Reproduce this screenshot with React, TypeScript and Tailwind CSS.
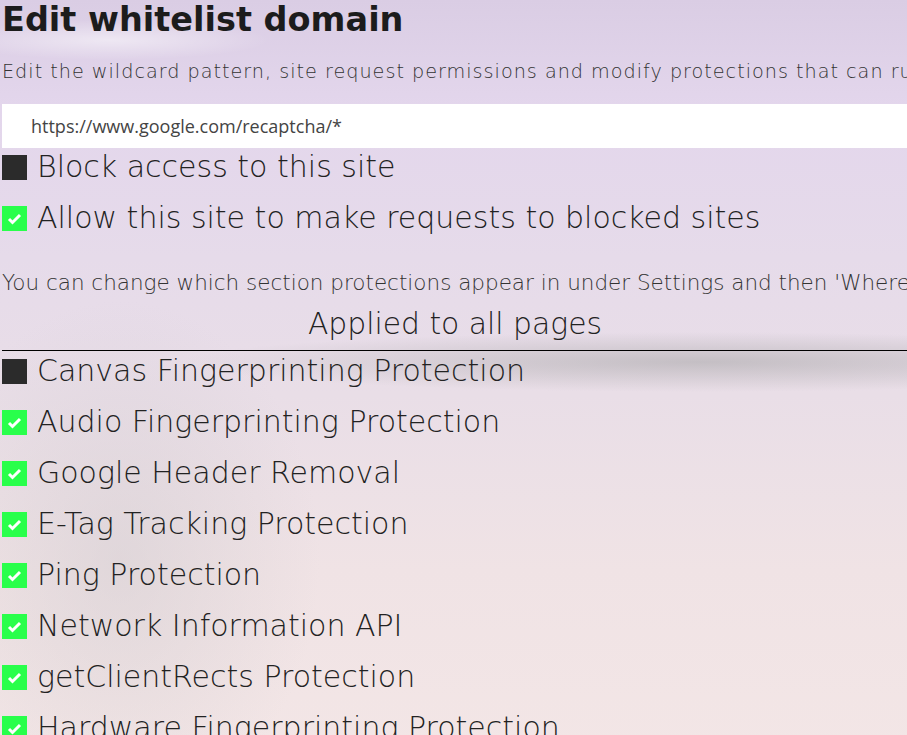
import React from "react";

const SITE_OPTIONS = [
  { label: "Block access to this site", checked: false },
  { label: "Allow this site to make requests to blocked sites", checked: true },
];

const PROTECTIONS = [
  { label: "Canvas Fingerprinting Protection", checked: false },
  { label: "Audio Fingerprinting Protection", checked: true },
  { label: "Google Header Removal", checked: true },
  { label: "E-Tag Tracking Protection", checked: true },
  { label: "Ping Protection", checked: true },
  { label: "Network Information API", checked: true },
  { label: "getClientRects Protection", checked: true },
  { label: "Hardware Fingerprinting Protection", checked: true },
];

function Box({ checked }: { checked: boolean }) {
  if (!checked) {
    return <span className="mt-[6px] block h-[25px] w-[25px] shrink-0 bg-[#2b2b2b]" />;
  }
  return (
    <span className="mt-[6px] flex h-[25px] w-[25px] shrink-0 items-center justify-center bg-[#29ff4b]">
      <svg width="25" height="25" viewBox="0 0 25 25">
        <polyline
          points="7,13 10.5,16.5 18,9"
          fill="none"
          stroke="white"
          strokeWidth="3"
        />
      </svg>
    </span>
  );
}

function Row({ label, checked }: { label: string; checked: boolean }) {
  return (
    <label className="flex h-[51px] items-start gap-[10px] whitespace-nowrap pt-[1px]">
      <Box checked={checked} />
      <span className="font-['DejaVu_Sans_ExtraLight','DejaVu_Sans',sans-serif] text-[30px] font-extralight leading-[35px] text-[#222]">
        {label}
      </span>
    </label>
  );
}

export default function App() {
  return (
    <div className="min-h-screen w-full overflow-hidden bg-[radial-gradient(ellipse_520px_30px_at_700px_362px,rgba(160,160,160,0.5),transparent),radial-gradient(ellipse_200px_260px_at_120px_560px,rgba(205,200,205,0.45),transparent),radial-gradient(ellipse_160px_20px_at_110px_40px,rgba(255,255,255,0.5),transparent),linear-gradient(180deg,#dacde4_0%,#e3d6ec_14%,#e6dbea_34%,#e9dee7_52%,#f0e3e5_75%,#f3e6e6_100%)] pl-[2px] font-['DejaVu_Sans',sans-serif]">
      <div className="w-[906px]">
        <h1 className="pt-[1px] text-[33.5px] font-bold leading-[38px] text-[#1c1c1c]">Edit whitelist domain</h1>

        <p className="mt-[21px] whitespace-nowrap font-['DejaVu_Sans_ExtraLight','DejaVu_Sans',sans-serif] text-[19.2px] font-extralight leading-[23px] tracking-[1px] text-[#333]">
          Edit the wildcard pattern, site request permissions and modify protections that can run on this site.
        </p>

        <div className="mt-[21px] flex h-[44px] w-[920px] items-center bg-white pl-[29px] font-['Open_Sans',sans-serif] text-[18px] text-[#444]">
          https://www.google.com/recaptcha/*
        </div>

        {SITE_OPTIONS.map((o) => (
          <Row key={o.label} label={o.label} checked={o.checked} />
        ))}

        <p className="mt-[21px] whitespace-nowrap font-['DejaVu_Sans_ExtraLight','DejaVu_Sans',sans-serif] text-[21.5px] font-extralight leading-[24px] text-[#333]">
          You can change which section protections appear in under Settings and then 'Where protections are shown'.
        </p>

        <h2 className="mt-[11px] text-center font-['DejaVu_Sans_ExtraLight','DejaVu_Sans',sans-serif] text-[29.8px] font-extralight leading-[35px] text-[#222]">
          Applied to all pages
        </h2>
        <div className="mt-[9px] w-[920px] border-t border-black" />

        <div className="pt-[1px]">
          {PROTECTIONS.map((p) => (
            <Row key={p.label} label={p.label} checked={p.checked} />
          ))}
        </div>
      </div>
    </div>
  );
}
